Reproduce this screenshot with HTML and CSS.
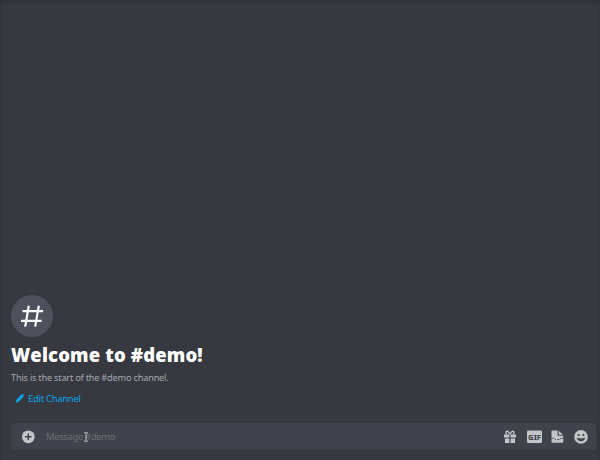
FILE: index.html
```html
<!DOCTYPE html>
<html lang="en">
<head>
<meta charset="utf-8">
<title>#demo</title>
<link rel="stylesheet" href="styles.css">
</head>
<body>
<main class="channel">
  <section class="welcome">
    <div class="channel-icon">
      <svg width="42" height="42" viewBox="0 0 42 42" fill="none" stroke="#fff" stroke-width="2.2"><path d="M17.8 10.8l-3.6 20.8M27.8 10.8l-3.6 20.8M11.5 16.2h20.6M10 25.8h20.6"/></svg>
    </div>
    <h1 class="title">Welcome to #demo!</h1>
    <p class="subtitle">This is the start of the #demo channel.</p>
    <a class="edit">
      <svg width="10" height="10" viewBox="0 0 10 10" fill="#0aa5ed"><path d="M5.8.9Q7.5-.2 8.5.3q.5 1.7-.8 3.1L4 7.5 1 8.9l.5-3.2z"/></svg>
      <span>Edit Channel</span>
    </a>
  </section>
  <div class="composer">
    <svg class="add" width="14" height="14" viewBox="0 0 14 14"><circle cx="7.3" cy="6.8" r="6.4" fill="#c3c5c9"/><path d="M7.3 3.5v6.6M4 6.8h6.6" stroke="#40434b" stroke-width="1.5"/></svg>
    <div class="field">Message #demo
      <svg class="caret" width="6" height="10" viewBox="0 0 6 10" fill="none" stroke="#c0c2c6" stroke-width="1"><path d="M1 .8h1.4L3 1.3l.6-.5H5M3 1.3v7.4M1 9.2h1.4L3 8.7l.6.5H5"/></svg>
    </div>
    <div class="actions">
      <svg width="14" height="14" viewBox="0 0 14 14" fill="#c3c5c9"><path d="M1 4.5h5.4v3H1zM7.6 4.5H13v3H7.6zM2 8.5h4.4V13H2zM7.6 8.5H12V13H7.6z"/><path d="M6.8 4.2C5.8 1.6 4.7.9 3.6 1.4S2.7 3.7 4 4M7.2 4.2c1-2.6 2.1-3.3 3.2-2.8s.9 2.3-.4 2.6" fill="none" stroke="#c3c5c9" stroke-width="1.3"/></svg>
      <svg width="15" height="14" viewBox="0 0 15 14"><rect y=".5" width="15" height="12.6" rx="1.3" fill="#c3c5c9"/><text class="gif" x="7.5" y="9.7" text-anchor="middle">GIF</text></svg>
      <svg width="13" height="14" viewBox="0 0 13 14"><path d="M1.3.5h5.2v4.3q0 1 1 1h4.8v5.7q0 1.2-1.2 1.2H1.7Q.5 12.7.5 11.5V1.3q0-.8.8-.8zM7.6.7l4.5 4H8.4q-.8 0-.8-.8z" fill="#c3c5c9"/><path d="M0 8.3h2.8M10.2 8.3H13M3.5 8.7q.3 1.2 1.4.7M6 9.3q1.2.8 2 0M8.4 9.2q1.1.3 1.3-.8" fill="none" stroke="#40434b" stroke-width=".8"/></svg>
      <svg width="14" height="14" viewBox="0 0 14 14"><circle cx="7" cy="6.9" r="6.8" fill="#c3c5c9"/><circle cx="4.6" cy="5" r="1.1" fill="#40434b"/><circle cx="9.4" cy="5" r="1.1" fill="#40434b"/><path d="M2.8 7.8q4.2 1.2 8.4 0Q10.6 11.2 7 11.2T2.8 7.8z" fill="#40434b"/></svg>
    </div>
  </div>
</main>
</body>
</html>
```

FILE: styles.css
```css
* { box-sizing: border-box; }
body {
  margin: 0;
  background: #36393f;
  font-family: "Noto Sans", "Open Sans", sans-serif;
}
.channel {
  height: 460px;
  display: flex;
  flex-direction: column;
  justify-content: flex-end;
  padding: 0 3px 10px 10px;
  border-top: 2px solid #303238;
  border-left: 1px solid #303238;
  border-right: 1px solid #33353b;
  box-shadow: inset 0 2px 2px #33363c;
}
.welcome { display: flex; flex-direction: column; align-items: flex-start; }
.channel-icon {
  width: 42px;
  height: 42px;
  border-radius: 50%;
  background: #4f525c;
}
.channel-icon svg { display: block; }
.title {
  margin: 5px 0 0;
  font: 800 18.5px/26px "Open Sans", "Noto Sans", sans-serif;
  letter-spacing: .14px;
  color: #fff;
  white-space: nowrap;
}
.subtitle {
  margin: 3px 0 0;
  font-size: 9.3px;
  line-height: 14px;
  letter-spacing: -.26px;
  color: #a5a7ab;
}
.edit {
  display: flex;
  align-items: center;
  gap: 3px;
  margin: 7px 0 17px 4px;
  font-size: 9.5px;
  line-height: 14px;
  letter-spacing: -.3px;
  color: #0aa5ed;
}
.composer {
  height: 27px;
  display: flex;
  align-items: center;
  padding: 0 8.5px 0 10px;
  border-radius: 4px;
  background: #40434b;
}
.field {
  position: relative;
  margin-left: 11px;
  font-size: 9.6px;
  line-height: 14px;
  letter-spacing: -.45px;
  color: #6b6e76;
}
.caret { position: absolute; left: 37px; top: 2px; }
.actions { display: flex; gap: 9.5px; margin-left: auto; }
.gif { font: 800 7.6px "Noto Sans", sans-serif; fill: #40434b; }
```
